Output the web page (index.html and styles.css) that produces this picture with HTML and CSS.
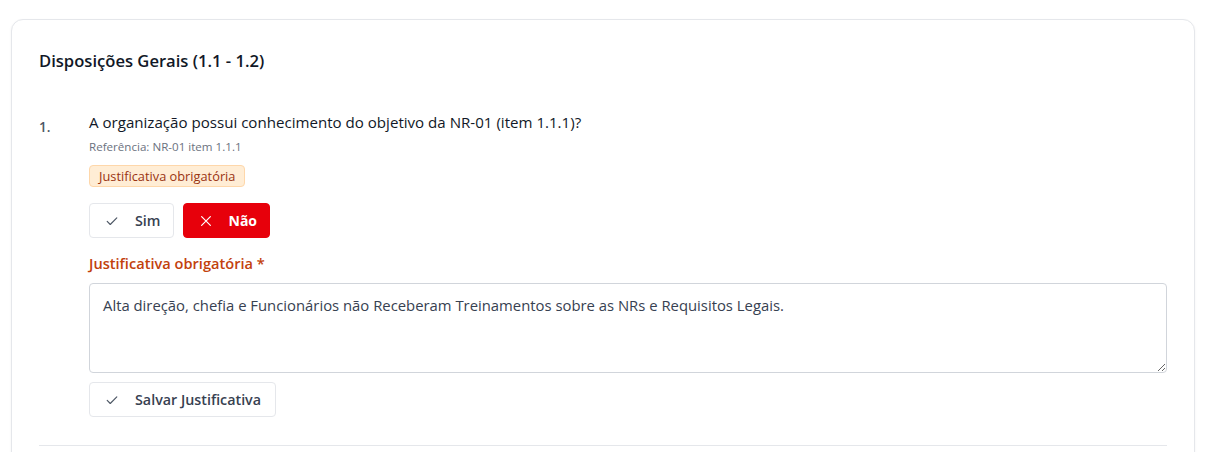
FILE: index.html
```html
<!DOCTYPE html>
<html lang="pt-BR">
<head>
<meta charset="utf-8">
<link rel="stylesheet" href="styles.css">
</head>
<body>
<div class="page">
  <section class="card">
    <h2 class="card-title">Disposições Gerais (1.1 - 1.2)</h2>
    <div class="item">
      <div class="num">1.</div>
      <div class="content">
        <div class="question">A organização possui conhecimento do objetivo da NR-01 (item 1.1.1)?</div>
        <div class="ref">Referência: NR-01 item 1.1.1</div>
        <span class="badge">Justificativa obrigatória</span>
        <div class="answers">
          <button class="btn btn-outline">
            <svg class="ico" viewBox="0 0 16 16" width="14" height="14"><path d="M2.5 8.5l3.5 3.5 7.5-7.5" fill="none" stroke="currentColor" stroke-width="1.3" stroke-linecap="round" stroke-linejoin="round"/></svg>
            <span>Sim</span>
          </button>
          <button class="btn btn-danger">
            <svg class="ico" viewBox="0 0 16 16" width="14" height="14"><path d="M3 3l10 10M13 3L3 13" fill="none" stroke="currentColor" stroke-width="1.4" stroke-linecap="round"/></svg>
            <span>Não</span>
          </button>
        </div>
        <label class="field-label">Justificativa obrigatória *</label>
        <textarea class="textarea" spellcheck="false">Alta direção, chefia e Funcionários não Receberam Treinamentos sobre as NRs e Requisitos Legais.</textarea>
        <button class="btn btn-outline btn-save">
          <svg class="ico" viewBox="0 0 16 16" width="14" height="14"><path d="M2.5 8.5l3.5 3.5 7.5-7.5" fill="none" stroke="currentColor" stroke-width="1.3" stroke-linecap="round" stroke-linejoin="round"/></svg>
          <span>Salvar Justificativa</span>
        </button>
      </div>
    </div>
    <hr class="divider">
  </section>
</div>
</body>
</html>
```
FILE: styles.css
```css
* { box-sizing: border-box; }
html, body { margin: 0; background: #fff; }
body {
  font-family: "Open Sans", "Noto Sans", sans-serif;
  color: #111827;
  overflow: hidden;
}
.page { padding: 19px 13px 0 11px; }
.card {
  border: 1px solid #e5e7eb;
  border-radius: 12px;
  padding: 29px 27px 40px;
  box-shadow: 0 1px 3px rgba(0,0,0,0.05);
  background: #fff;
}
.card-title {
  margin: 0 0 39px;
  font-size: 16.6px;
  line-height: 24px;
  font-weight: 600;
  color: #111827;
}
.item { display: flex; }
.num {
  width: 50px;
  flex: none;
  font-size: 13.5px;
  font-weight: 600;
  color: #4b5563;
  padding-top: 5px;
  line-height: 20px;
}
.content { flex: 1; display: flex; flex-direction: column; align-items: flex-start; }
.question { font-size: 15.1px; line-height: 20px; color: #111827; }
.ref { margin-top: 7px; font-size: 11.6px; line-height: 16px; color: #6b7280; }
.badge {
  margin-top: 10px;
  display: inline-flex;
  align-items: center;
  height: 22px;
  padding: 0 9px;
  background: #ffedd5;
  border: 1px solid #fed7aa;
  border-radius: 4px;
  color: #9a3412;
  font-size: 12.8px;
}
.answers { display: flex; gap: 9px; margin-top: 16px; }
.btn {
  display: inline-flex;
  align-items: center;
  gap: 16px;
  height: 35px;
  padding: 0 12px 0 15px;
  border-radius: 4px;
  font-family: inherit;
  font-size: 14.3px;
  font-weight: 600;
  cursor: pointer;
}
.btn-outline { background: #fff; border: 1px solid #e5e7eb; color: #374151; }
.btn-outline .ico { color: #4b5563; }
.btn-danger { background: #e7000b; border: 1px solid #e7000b; color: #fff; font-weight: 700; gap: 16px; font-size: 14px; }
.ico { flex: none; }
.field-label {
  margin-top: 15px;
  font-size: 14.6px;
  line-height: 20px;
  font-weight: 600;
  color: #c2410c;
}
.textarea {
  margin-top: 10px;
  width: 100%;
  height: 90px;
  border: 1px solid #d1d5db;
  border-radius: 4px;
  padding: 11px 13px;
  font-family: inherit;
  font-size: 14.85px;
  line-height: 20px;
  color: #374151;
  resize: vertical;
}
.btn-save { margin-top: 9px; padding-right: 14px; }
.divider { margin: 28px 0 0; border: 0; border-top: 1px solid #e5e7eb; }
```
